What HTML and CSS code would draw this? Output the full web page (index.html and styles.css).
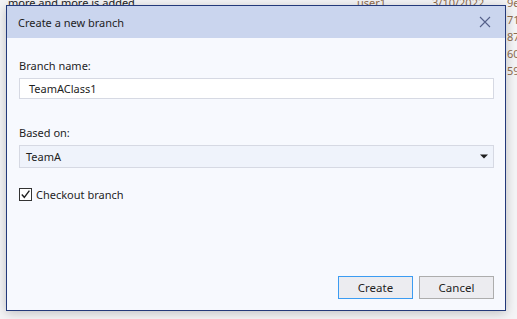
FILE: index.html
```html
<!DOCTYPE html>
<html lang="en">
<head>
    <meta charset="UTF-8">
    <title>Create a new branch</title>
    <link rel="stylesheet" href="styles.css">
</head>
<body>

    <div class="history">
        <div class="row"><span>more and more is added</span><span class="meta">user1</span><span class="meta">3/10/2022</span><span class="meta">9e</span></div>
        <div class="row"><span></span><span></span><span></span><span class="meta">71</span></div>
        <div class="row"><span></span><span></span><span></span><span class="meta">87</span></div>
        <div class="row"><span></span><span></span><span></span><span class="meta">60</span></div>
        <div class="row"><span></span><span></span><span></span><span class="meta">59</span></div>
    </div>

    <div class="dialog">
        <div class="dialog-header">
            <span>Create a new branch</span>
            <svg class="close" width="12" height="12" viewBox="0 0 12 12">
                <path d="M1 1 L11 11 M11 1 L1 11" stroke="#55608a" stroke-width="1.1" fill="none"/>
            </svg>
        </div>
        <div class="dialog-body">
            <label class="field-label">Branch name:</label>
            <div class="text-input">TeamAClass1</div>

            <label class="field-label based">Based on:</label>
            <div class="select">
                <span>TeamA</span>
                <svg width="8" height="5" viewBox="0 0 8 5"><path d="M0 0.5 L8 0.5 L4 4.5 Z" fill="#1e1e1e"/></svg>
            </div>

            <div class="check-row">
                <span class="checkbox">
                    <svg width="11" height="11" viewBox="0 0 11 11"><path d="M1.8 5.6 L4.3 8.3 L9.4 1.6" stroke="#1e1e1e" stroke-width="1.4" fill="none"/></svg>
                </span>
                <span>Checkout branch</span>
            </div>

            <div class="buttons">
                <button class="btn btn-default">Create</button>
                <button class="btn">Cancel</button>
            </div>
        </div>
    </div>

</body>
</html>
```

FILE: styles.css
```css
* {
    margin: 0;
    padding: 0;
    box-sizing: border-box;
}
body {
    font-family: "Noto Sans", "Open Sans", sans-serif;
    font-size: 11px;
    color: #1e1e1e;
    background-color: #f4f4f6;
    width: 517px;
    height: 319px;
    overflow: hidden;
    position: relative;
}
.history {
    margin-top: -6px;
}
.row {
    display: grid;
    grid-template-columns: 349px 75px 75px auto;
    padding-left: 8px;
    height: 17px;
    line-height: 17px;
}
.row .meta {
    color: #8f6c4e;
}
.dialog {
    position: absolute;
    left: 6px;
    top: 5px;
    width: 500px;
    height: 306px;
    border: 1px solid #23397a;
    background-color: #f7f9fe;
    box-shadow: 0 2px 10px rgba(0, 0, 0, 0.22);
    display: flex;
    flex-direction: column;
}
.dialog-header {
    height: 32px;
    background-color: #cad5ee;
    display: flex;
    align-items: center;
    justify-content: space-between;
    padding: 0 14px 0 11px;
}
.dialog-body {
    flex: 1;
    display: flex;
    flex-direction: column;
    padding: 20px 11px 11px 12px;
}
.field-label {
    line-height: 16px;
    margin-bottom: 4px;
}
.field-label.based {
    margin-top: 26px;
}
.text-input {
    height: 21px;
    background-color: #ffffff;
    border: 1px solid #d6d9e3;
    padding-left: 9px;
    line-height: 19px;
}
.select {
    height: 23px;
    background-color: #eff3fb;
    border: 1px solid #d6d9e3;
    padding: 0 5px 0 6px;
    display: flex;
    align-items: center;
    justify-content: space-between;
}
.check-row {
    display: flex;
    align-items: center;
    gap: 4px;
    margin-top: 19px;
}
.checkbox {
    width: 13px;
    height: 13px;
    border: 1px solid #333333;
    background-color: #ffffff;
    display: flex;
    align-items: center;
    justify-content: center;
}
.buttons {
    margin-top: auto;
    display: flex;
    justify-content: flex-end;
    gap: 6px;
}
.btn {
    width: 75px;
    height: 23px;
    font-family: inherit;
    font-size: 11.5px;
    color: #1e1e1e;
    background-color: #ececf0;
    border: 1px solid #adadad;
}
.btn-default {
    border-color: #3c9cf2;
}
```
